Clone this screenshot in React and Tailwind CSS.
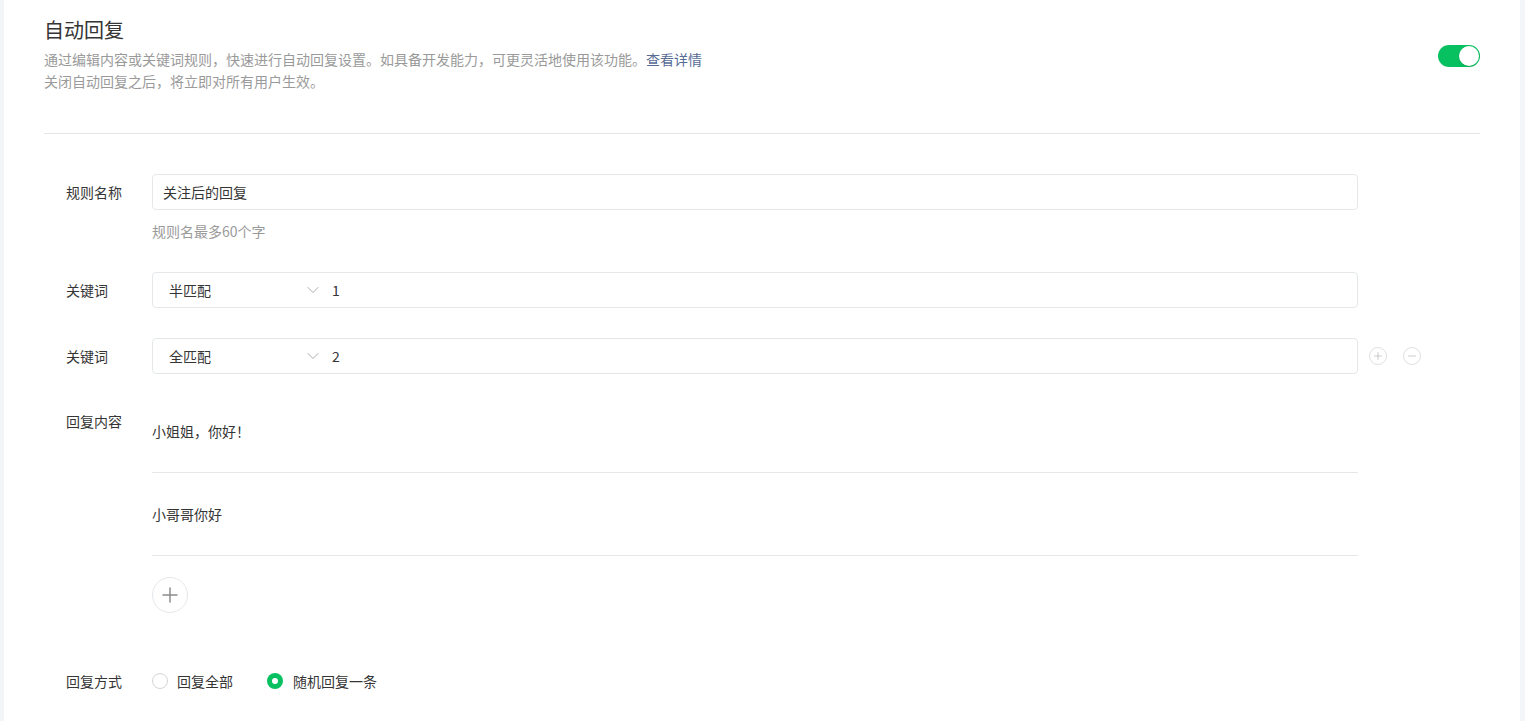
import React from "react";
import { ChevronDown, Plus, Minus } from "lucide-react";

const FONT = { fontFamily: '"Noto Sans CJK SC", "Noto Sans", sans-serif' };

function KeywordRow({ mode, value, actions }) {
  return (
    <div className="flex items-center">
      <div className="w-[86px] text-sm text-[#353535]">关键词</div>
      <div className="w-[1206px] h-9 border border-[#e4e8eb] rounded flex items-center text-sm text-[#353535]">
        <div className="w-[170px] pl-4 flex items-center justify-between">
          <span>{mode}</span>
          <ChevronDown className="w-5 h-5 text-[#a3a3a3]" strokeWidth={1.1} />
        </div>
        <span className="pl-[9px]">{value}</span>
      </div>
      {actions && (
        <div className="flex items-center gap-4 ml-[11px]">
          <span className="w-[18px] h-[18px] rounded-full border border-[#e0e0e0] flex items-center justify-center">
            <Plus className="w-3 h-3 text-[#b5b5b5]" strokeWidth={1.4} />
          </span>
          <span className="w-[18px] h-[18px] rounded-full border border-[#e0e0e0] flex items-center justify-center">
            <Minus className="w-3 h-3 text-[#b5b5b5]" strokeWidth={1.4} />
          </span>
        </div>
      )}
    </div>
  );
}

export default function App() {
  return (
    <div className="min-h-screen bg-[#f4f5f9] flex" style={FONT}>
      <div className="ml-1 w-[1516px] bg-white px-10 pt-[16px] pb-10">
        {/* header */}
        <div className="flex items-center justify-between">
          <div>
            <h2 className="text-xl leading-7 text-[#353535]">自动回复</h2>
            <p className="mt-1 text-sm leading-[22px] text-[#9a9a9a]">
              通过编辑内容或关键词规则，快速进行自动回复设置。如具备开发能力，可更灵活地使用该功能。
              <a className="text-[#576b95]">查看详情</a>
              <br />
              关闭自动回复之后，将立即对所有用户生效。
            </p>
          </div>
          <div className="w-[42px] h-[22px] rounded-full bg-[#07c160] relative mt-1">
            <span className="absolute right-px top-px w-5 h-5 rounded-full bg-white shadow-sm" />
          </div>
        </div>

        <div className="mt-[41px] border-t border-[#e7e7eb]" />

        {/* form */}
        <div className="pl-[22px] pt-10">
          <div className="flex items-start">
            <div className="w-[86px] h-9 flex items-center text-sm text-[#353535]">规则名称</div>
            <div>
              <div className="w-[1206px] h-9 border border-[#e4e8eb] rounded flex items-center pl-[10px] text-sm text-[#353535]">
                关注后的回复
              </div>
              <div className="mt-[11px] text-sm leading-5 text-[#9a9a9a]">规则名最多60个字</div>
            </div>
          </div>

          <div className="mt-[31px]">
            <KeywordRow mode="半匹配" value="1" />
          </div>
          <div className="mt-[30px]">
            <KeywordRow mode="全匹配" value="2" actions />
          </div>

          <div className="mt-4 flex items-start">
            <div className="w-[86px] mt-[21px] text-sm leading-5 text-[#353535]">回复内容</div>
            <div className="w-[1206px]">
              {["小姐姐，你好！", "小哥哥你好"].map((t) => (
                <div key={t} className="pt-[31px] pb-[31px] border-b border-[#e7e7eb] text-sm leading-5 text-[#353535]">
                  {t}
                </div>
              ))}
              <div className="mt-[21px] w-9 h-9 rounded-full border border-[#e4e8eb] flex items-center justify-center">
                <Plus className="w-6 h-6 text-[#8c8c8c]" strokeWidth={1.5} />
              </div>
            </div>
          </div>

          <div className="mt-[58px] flex items-center text-sm leading-5 text-[#353535]">
            <div className="w-[86px]">回复方式</div>
            <label className="flex items-center gap-[9px]">
              <span className="w-4 h-4 rounded-full border border-[#d4d4d8]" />
              回复全部
            </label>
            <label className="flex items-center gap-[10px] ml-[34px]">
              <span className="w-4 h-4 rounded-full bg-[#07c160] flex items-center justify-center">
                <span className="w-1.5 h-1.5 rounded-full bg-white" />
              </span>
              随机回复一条
            </label>
          </div>
        </div>
      </div>
    </div>
  );
}
